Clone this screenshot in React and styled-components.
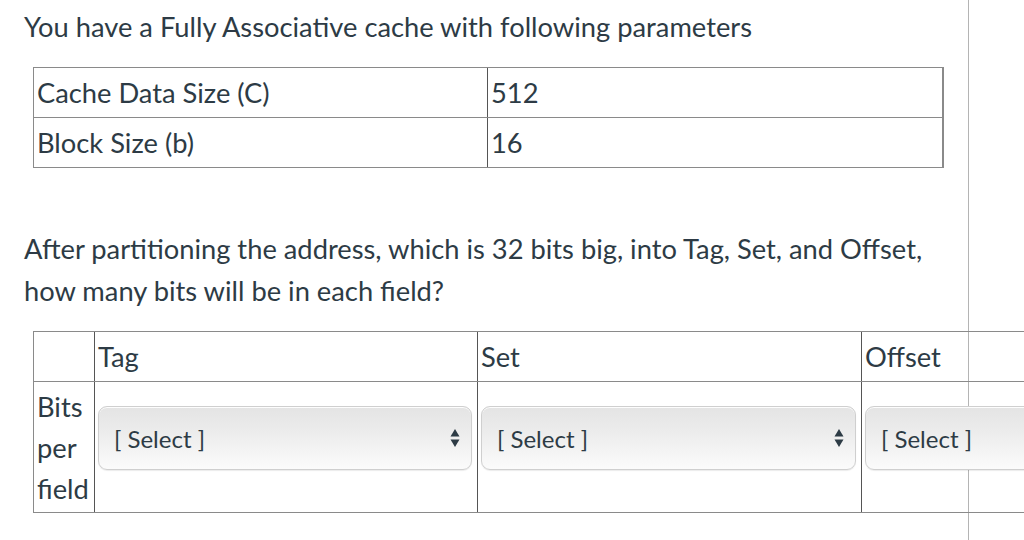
import React from "react";
import styled, { createGlobalStyle } from "styled-components";

const GlobalStyle = createGlobalStyle`
  html, body {
    margin: 0;
    padding: 0;
    background: #ffffff;
    overflow: hidden;
  }
  body {
    font-family: Lato, "Open Sans", "Liberation Sans", sans-serif;
    color: #2d3b45;
  }
`;

const Page = styled.div`
  display: flex;
  width: 1024px;
  height: 540px;
  overflow: hidden;
`;

const Content = styled.div`
  box-sizing: border-box;
  flex: 0 0 969px;
  width: 969px;
  min-height: 540px;
  padding: 6px 0 0 24px;
  border-right: 1px solid #b4b4b4;
`;

const Para = styled.p`
  margin: ${(p) => p.$top || 0}px 0 0 0;
  font-size: 27.3px;
  line-height: 42px;
  white-space: nowrap;
`;

const Table = styled.table`
  border-collapse: collapse;
  table-layout: fixed;
  margin-left: 9px;
  margin-top: ${(p) => p.$top || 0}px;
  width: ${(p) => p.$width}px;
  border-top: 1px solid #8a8a8a;
  border-left: 1px solid #8a8a8a;
  border-right: 2px solid #8a8a8a;
  border-bottom: 1px solid #333;
  font-size: 27.3px;
  line-height: 41px;
`;

const Cell = styled.td`
  padding: 4px 3px ${(p) => (p.$tight ? 3 : 4)}px 3px;
  border-top: 1px solid #8a8a8a;
  border-bottom: 1px solid #8a8a8a;
  border-left: 1px solid #555;
  vertical-align: ${(p) => (p.$tight ? "top" : "middle")};
  text-align: left;
  color: #2d3b45;
  &:first-child {
    border-left: 1px solid #8a8a8a;
  }
`;

const SelectWrap = styled.div`
  position: relative;
  margin: 20px 2px 0 0;
`;

const Select = styled.select`
  appearance: none;
  -webkit-appearance: none;
  box-sizing: border-box;
  display: block;
  width: 100%;
  height: 64px;
  padding: 0 40px 0 15px;
  font-family: Lato, "Open Sans", "Liberation Sans", sans-serif;
  font-size: 24px;
  color: #2d3b45;
  border: 1px solid #cfcfcf;
  border-radius: 9px;
  background: linear-gradient(to bottom, #e4e4e4 0%, #ececec 40%, #fbfbfb 100%);
  box-shadow: inset 0 1px 0 rgba(255, 255, 255, 0.9), 0 1px 1px rgba(0, 0, 0, 0.08);
  outline: none;
`;

const Arrow = styled.svg`
  position: absolute;
  right: 12px;
  top: 22px;
  width: 10px;
  height: 20px;
  pointer-events: none;
`;

function SelectField() {
  return (
    <SelectWrap>
      <Select defaultValue="">
        <option value="">[ Select ]</option>
      </Select>
      <Arrow viewBox="0 0 10 20">
        <path d="M5 1 L9.5 8.5 L0.5 8.5 Z" fill="#2d3b45" />
        <path d="M0.5 11.5 L9.5 11.5 L5 19 Z" fill="#2d3b45" />
      </Arrow>
    </SelectWrap>
  );
}

export default function App() {
  return (
    <>
      <GlobalStyle />
      <Page>
        <Content>
          <Para>You have a Fully Associative cache with following parameters</Para>
          <Table $top={19} $width={909}>
            <colgroup>
              <col style={{ width: 454 }} />
              <col style={{ width: 455 }} />
            </colgroup>
            <tbody>
              <tr>
                <Cell>Cache Data Size (C)</Cell>
                <Cell>512</Cell>
              </tr>
              <tr>
                <Cell>Block Size (b)</Cell>
                <Cell>16</Cell>
              </tr>
            </tbody>
          </Table>
          <Para $top={60}>
            After partitioning the address, which is 32 bits big, into Tag, Set, and Offset,
          </Para>
          <Para>how many bits will be in each field?</Para>
          <Table $top={19} $width={1212}>
            <colgroup>
              <col style={{ width: 61 }} />
              <col style={{ width: 383 }} />
              <col style={{ width: 384 }} />
              <col style={{ width: 384 }} />
            </colgroup>
            <tbody>
              <tr>
                <Cell />
                <Cell>Tag</Cell>
                <Cell>Set</Cell>
                <Cell>Offset</Cell>
              </tr>
              <tr>
                <Cell $tight>Bits per field</Cell>
                <Cell $tight><SelectField /></Cell>
                <Cell $tight><SelectField /></Cell>
                <Cell $tight><SelectField /></Cell>
              </tr>
            </tbody>
          </Table>
        </Content>
      </Page>
    </>
  );
}
